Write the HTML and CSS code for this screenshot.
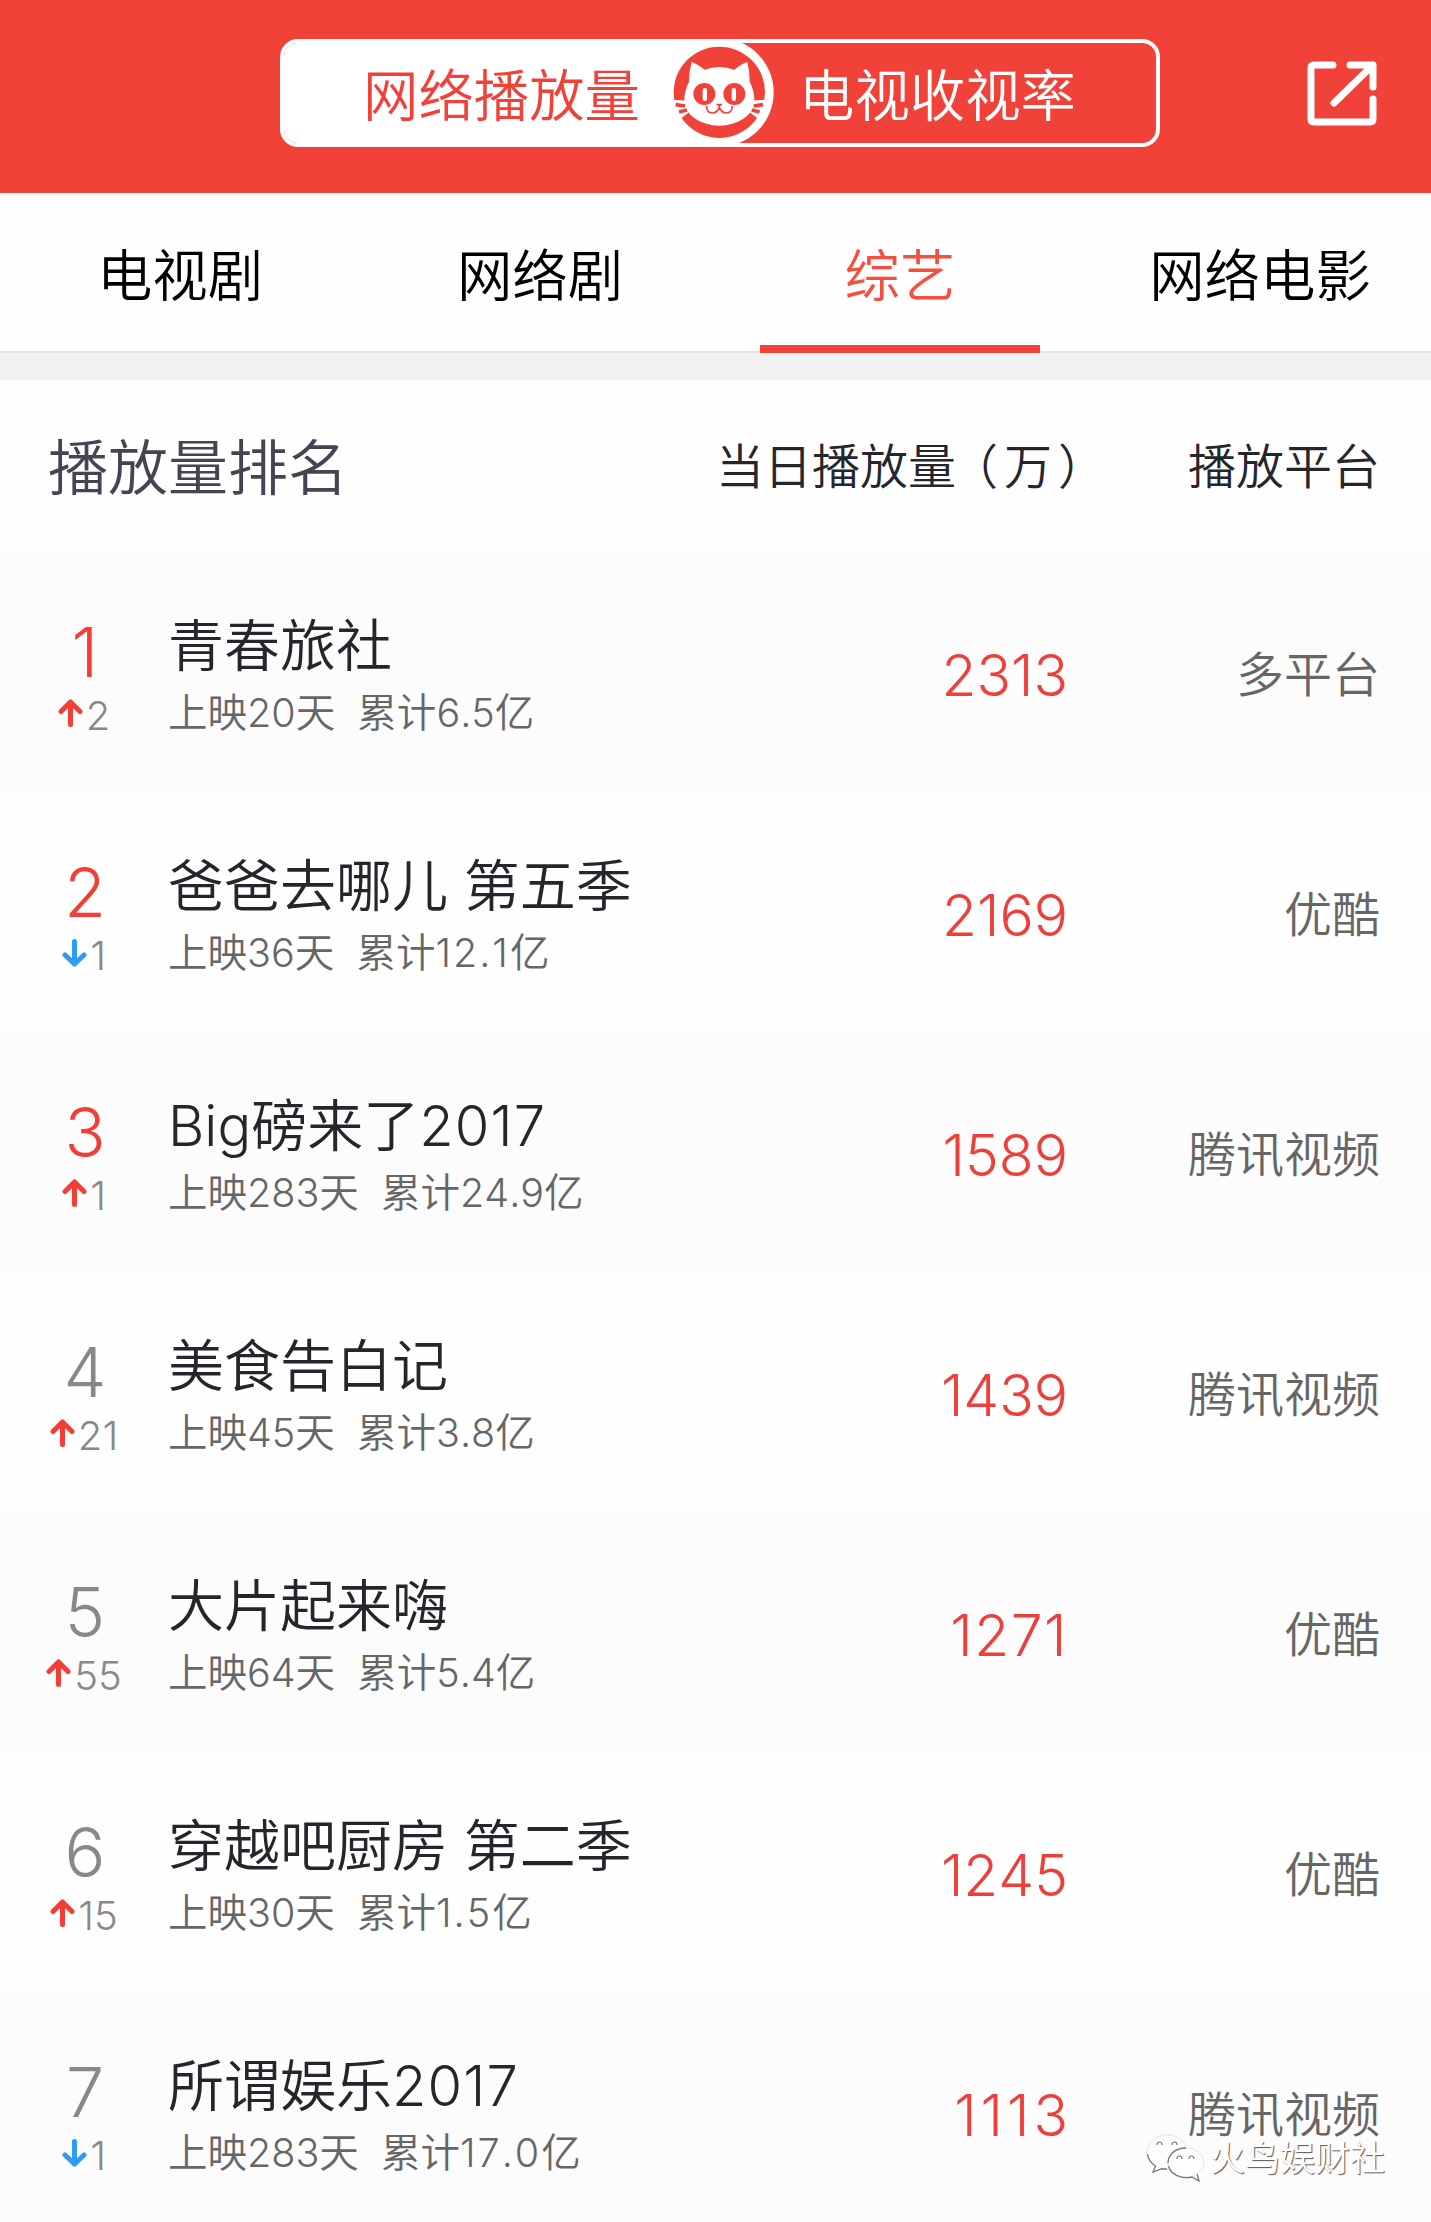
FILE: index.html
```html
<!DOCTYPE html>
<html lang="zh-CN">
<head>
<meta charset="utf-8">
<title>播放量排名</title>
<link rel="stylesheet" href="styles.css">
</head>
<body>
<svg class="defs" width="0" height="0">
  <symbol id="up" viewBox="0 0 24 28"><path d="M12 25.500V3M2.500 12.500L12 3l9.500 9.500" fill="none" stroke="#f43d37" stroke-width="5" stroke-linecap="round" stroke-linejoin="round"/></symbol>
  <symbol id="down" viewBox="0 0 24 28"><path d="M12 2.500V25M2.500 16L12 25l9.500-9" fill="none" stroke="#2a9df8" stroke-width="5" stroke-linecap="round" stroke-linejoin="round"/></symbol>
</svg>
<header class="topbar">
  <div class="switch">
    <div class="side active">网络播放量</div>
    <div class="side">电视收视率</div>
    <svg class="cat" viewBox="69 39 338 300">
      <circle cx="238" cy="187" r="163" fill="#fff"/>
      <circle cx="238" cy="187" r="137" fill="#f14239"/>
      <path d="M96 209L145 212V248L122 266L98 258ZM380 209L331 212V248L354 266L378 258Z" fill="#fff"/>
      <path d="M155 96Q173 102 193 119Q238 103 283 119Q303 102 322 96Q329 124 329 155Q343 181 343 211C343 258 290 287 238 287C186 287 133 258 133 211Q133 181 147 155Q147 124 155 96Z" fill="#fff"/>
      <path d="M107 224L135 228M117 246L141 240M369 224L341 228M359 246L335 240" stroke="#f14239" stroke-width="11"/>
      <circle cx="193" cy="192" r="33" fill="#f14239"/><circle cx="283" cy="192" r="33" fill="#f14239"/>
      <rect x="188" y="174" width="13" height="39" rx="6" fill="#fff"/><rect x="275" y="174" width="13" height="39" rx="6" fill="#fff"/>
      <path d="M227 221H249L238 232Z" fill="#f14239"/>
      <path d="M199 228C200 244 207 249 217 249Q231 249 238 232Q245 249 259 249C269 249 276 244 277 228" fill="none" stroke="#f14239" stroke-width="5"/>
    </svg>
  </div>
  <svg class="share" viewBox="0 0 70 66"><path d="M26 4H7Q4 4 4 7V58Q4 61 7 61H63Q66 61 66 58V38M43 4H66V26M66 4L27 42" fill="none" stroke="#fff" stroke-width="7" stroke-linecap="round" stroke-linejoin="round"/></svg>
</header>
<nav class="tabs">
  <div class="tab">电视剧</div>
  <div class="tab">网络剧</div>
  <div class="tab current">综艺</div>
  <div class="tab">网络电影</div>
</nav>
<section class="heading">
  <h1>播放量排名</h1>
  <span class="plays-label">当日播放量<i class="open">（</i>万<i class="close">）</i></span>
  <span class="platform-label">播放平台</span>
</section>
<main>
  <div class="row"><div class="rank"><b class="top">1</b><span><svg><use href="#up"/></svg>2</span></div><div class="show"><h2>青春旅社</h2><p>上映20天&nbsp; 累计<i>6.5</i>亿</p></div><div class="plays">2313</div><div class="platform">多平台</div></div>
  <div class="row"><div class="rank"><b class="top">2</b><span><svg><use href="#down"/></svg>1</span></div><div class="show"><h2>爸爸去哪儿 第五季</h2><p>上映36天&nbsp; 累计<i class="wide">12.1</i>亿</p></div><div class="plays">2169</div><div class="platform">优酷</div></div>
  <div class="row"><div class="rank"><b class="top">3</b><span><svg><use href="#up"/></svg>1</span></div><div class="show"><h2>Big磅来了<i class="year">2017</i></h2><p>上映283天&nbsp; 累计24.9亿</p></div><div class="plays">1589</div><div class="platform">腾讯视频</div></div>
  <div class="row"><div class="rank"><b>4</b><span><svg><use href="#up"/></svg>21</span></div><div class="show"><h2>美食告白记</h2><p>上映45天&nbsp; 累计3.8亿</p></div><div class="plays">1439</div><div class="platform">腾讯视频</div></div>
  <div class="row"><div class="rank"><b>5</b><span><svg><use href="#up"/></svg>55</span></div><div class="show"><h2>大片起来嗨</h2><p>上映64天&nbsp; 累计5.4亿</p></div><div class="plays loose">1271</div><div class="platform">优酷</div></div>
  <div class="row"><div class="rank"><b>6</b><span><svg><use href="#up"/></svg>15</span></div><div class="show"><h2>穿越吧厨房 第二季</h2><p>上映30天&nbsp; 累计<i class="wide">1.5</i>亿</p></div><div class="plays">1245</div><div class="platform">优酷</div></div>
  <div class="row"><div class="rank"><b>7</b><span><svg><use href="#down"/></svg>1</span></div><div class="show"><h2>所谓娱乐<i class="year">2017</i></h2><p>上映283天&nbsp; 累计<i class="wide">17.0</i>亿</p></div><div class="plays looser">1113</div><div class="platform">腾讯视频</div></div>
</main>
<div class="watermark">
  <svg viewBox="0 0 60 50">
    <g fill="#fdfdfd" stroke="#ccc" stroke-width=".5">
      <path d="M21 2C9 2 1 10 1 19C1 25 4 30 9 33L7 39L15 36C28 39 41 31 41 19C41 10 33 2 21 2Z"/>
      <path d="M40 15C29 15 22 22 22 30C22 40 32 47 46 44L53 48L51 41C55 38 58 34 58 30C58 22 50 15 40 15Z"/>
    </g>
    <path d="M1.500 21C2 26 5 30 9.500 33L7 39L15 36H21M22 30C22 22 29 15 40 15M22.500 33C25 42 35 46 46 44L53 48L51 41" fill="none" stroke="#777" stroke-width="1.300"/>
    <path d="M11 12Q11 9 13.500 9Q16 9 16 12M26 12Q26 9 28.500 9Q31 9 31 12M31 26Q31 23 33 23Q36 23 36 26M43 26Q43 23 45 23Q48 23 48 26" fill="none" stroke="#777" stroke-width="1.200"/>
  </svg>
  <span>火鸟娱财社</span>
</div>
</body>
</html>
```
FILE: styles.css
```css
* { box-sizing: border-box; margin: 0; padding: 0; }
html, body { height: 2222px; overflow: hidden; }
body {
  position: relative;
  width: 1431px;
  background: #fefefe;
  color: #25262b;
  font-family: Inter, "Noto Sans CJK SC", sans-serif;
  font-weight: 350;
  font-kerning: none;
  font-feature-settings: "calt" 0;
  white-space: nowrap;
}
i { font-style: normal; }
.defs { display: block; height: 0; }

.topbar {
  height: 193px;
  padding: 39px 54px 0 280px;
  display: flex;
  justify-content: space-between;
  background: #f14239;
}
.switch {
  position: relative;
  display: flex;
  width: 880px;
  height: 108px;
  border: 4px solid #fff;
  border-radius: 18px;
  color: #fff;
  font-size: 55.400px;
  line-height: 105px;
  overflow: hidden;
}
.side { flex: 1; padding-left: 79px; }
.side.active { background: #fff; color: #f14239; }
.cat { position: absolute; left: 379px; top: 0; width: 112.700px; height: 100px; }
.share { width: 70px; height: 66px; margin-top: 22px; }

.tabs {
  display: flex;
  height: 160px;
  border-bottom: 2px solid #e3e3e3;
  color: #000;
  font-size: 55.400px;
  line-height: 166px;
}
.tab { flex: 0 0 360px; display: flex; flex-direction: column; align-items: center; height: 160px; }
.tab.current { color: #f5503f; }
.tab.current::after { content: ""; width: 280px; height: 8px; margin-top: -14px; background: #f14239; flex: none; }

.heading {
  display: flex;
  align-items: center;
  height: 199px;
  padding: 0 51px 6px 48px;
  border-top: 27px solid #f1f1f1;
  font-size: 48px;
}
.heading h1 { width: 668px; font-size: 60px; font-weight: 350; color: #464452; }
.open, .close { font-feature-settings: "halt" 1; }
.open { margin: 0 6px 0 18px; }
.close { margin: 0 18px 0 6px; }
.platform-label { margin-left: auto; }

.row {
  display: flex;
  height: 240px;
  padding-right: 51px;
}
.row:nth-child(odd) { background: #fcfcfc; }
.rank { width: 168px; padding-top: 62px; text-align: center; }
.rank b { display: block; padding-left: 2px; font-size: 68px; line-height: 77px; font-weight: 300; color: #888; }
.rank b.top { color: #f33e38; }
.rank span { display: flex; justify-content: center; gap: 3px; font-size: 40px; line-height: 49px; color: #888; }
.rank svg { width: 25px; height: 28px; margin-top: 8px; }
.show { width: 650px; padding-top: 59px; }
.show h2 { font-size: 56px; font-weight: 350; line-height: 70px; }
.show p { margin-top: 6px; font-size: 39.500px; line-height: 52px; color: #666; }
.year { letter-spacing: 1.200px; }
.wide { letter-spacing: 2px; }
.plays { width: 250px; text-align: right; font-size: 57px; line-height: 247px; color: #ee403a; }
.plays.loose { letter-spacing: 1.500px; }
.plays.looser { letter-spacing: 4px; padding-left: 4px; margin-right: -4px; width: 254px; }
.platform { margin-left: auto; font-size: 48px; line-height: 246px; color: #666; }

.watermark {
  position: absolute;
  left: 1146px;
  top: 2133px;
  display: flex;
  color: #fff;
  font-size: 35px;
  line-height: 50px;
  text-shadow: 1px 1px 1px #555;
}
.watermark svg { width: 60px; height: 50px; margin-right: 4px; }
```
